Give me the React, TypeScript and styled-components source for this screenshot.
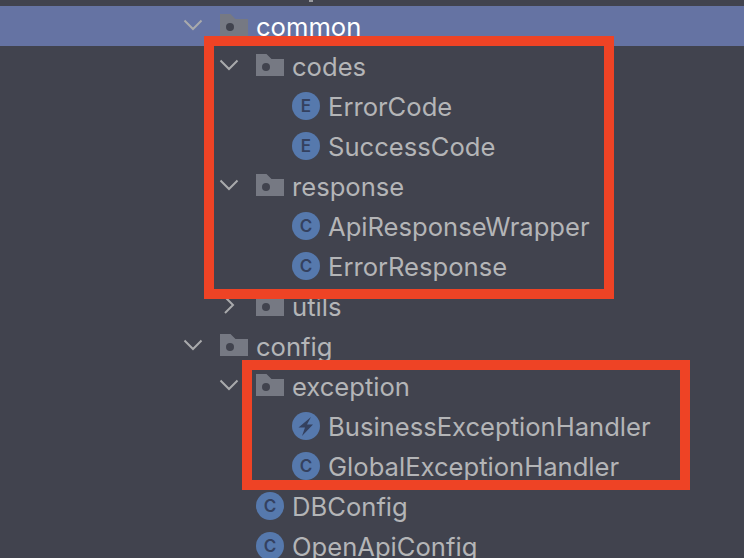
import React from "react";
import styled, { createGlobalStyle } from "styled-components";

type Kind = "enum" | "class" | "aspect";

type Node = {
  label: string;
  depth: number;
  folder?: boolean;
  open?: boolean;
  kind?: Kind;
  selected?: boolean;
};

const GlobalStyle = createGlobalStyle`
  html, body {
    margin: 0;
    background: #41434e;
  }
`;

const Page = styled.div`
  position: relative;
  width: 744px;
  height: 558px;
  overflow: hidden;
  background: #41434e;
  font-family: Inter, "Liberation Sans", sans-serif;
`;

const Tree = styled.div`
  display: flex;
  flex-direction: column;
  margin-top: 6px;
`;

const Row = styled.div<{ $selected?: boolean; $depth: number }>`
  display: flex;
  align-items: center;
  height: 40px;
  flex: none;
  padding-left: ${(p) => 182 + p.$depth * 36}px;
  background: ${(p) => (p.$selected ? "#6573a3" : "transparent")};
  color: ${(p) => (p.$selected ? "#ffffff" : "#b4b5b7")};
`;

const Toggle = styled.span`
  display: flex;
  align-items: center;
  justify-content: center;
  width: 22px;
  height: 24px;
  margin: 0 16px 2px 0;
  color: #a9aaac;
`;

const Folder = styled.svg`
  flex: none;
  margin-bottom: 2px;
`;

const Label = styled.span`
  font-size: 25.6px;
  line-height: 40px;
  white-space: nowrap;
  margin-left: 8px;
  padding-top: 1px;
`;

const Badge = styled.span`
  display: flex;
  align-items: center;
  justify-content: center;
  flex: none;
  width: 28px;
  height: 28px;
  margin-left: 38px;
  border-radius: 50%;
  background: #5679ad;
  color: #34415f;
  font-size: 17px;
  font-weight: 600;
  line-height: 1;
`;

const Marker = styled.div<{ $left: number; $top: number; $width: number; $height: number }>`
  position: absolute;
  left: ${(p) => p.$left}px;
  top: ${(p) => p.$top}px;
  width: ${(p) => p.$width}px;
  height: ${(p) => p.$height}px;
  box-sizing: border-box;
  border: 10px solid #ee4325;
`;

// tail of a letter from the row scrolled away above the top edge
const ClippedGlyph = styled.span`
  position: absolute;
  left: 309px;
  top: 0;
  width: 4px;
  height: 2px;
  background: #9a9ba0;
`;

const nodes: Node[] = [
  { label: "common", depth: 0, folder: true, open: true, selected: true },
  { label: "codes", depth: 1, folder: true, open: true },
  { label: "ErrorCode", depth: 2, kind: "enum" },
  { label: "SuccessCode", depth: 2, kind: "enum" },
  { label: "response", depth: 1, folder: true, open: true },
  { label: "ApiResponseWrapper", depth: 2, kind: "class" },
  { label: "ErrorResponse", depth: 2, kind: "class" },
  { label: "utils", depth: 1, folder: true },
  { label: "config", depth: 0, folder: true, open: true },
  { label: "exception", depth: 1, folder: true, open: true },
  { label: "BusinessExceptionHandler", depth: 2, kind: "aspect" },
  { label: "GlobalExceptionHandler", depth: 2, kind: "class" },
  { label: "DBConfig", depth: 1, kind: "class" },
  { label: "OpenApiConfig", depth: 1, kind: "class" },
];

const FolderIcon = () => (
  <Folder width="28" height="22" viewBox="0 0 28 22">
    <path d="M0 0h10.5l5 5H28v17H0z" fill="#767983" />
    <circle cx="10" cy="13" r="4" fill="#41434e" />
  </Folder>
);

const Chevron = ({ open }: { open?: boolean }) => (
  <svg width="20" height="20" viewBox="0 0 20 20" fill="none" stroke="currentColor" strokeWidth="2">
    <path d={open ? "M1.500 5.500 10 14l8.500-8.500" : "M6 2l8 8-8 8"} />
  </svg>
);

const BoltIcon = () => (
  <svg width="28" height="28" viewBox="0 0 28 28">
    <path d="M19 5 6.500 15.500H13L10 24l11-11.500H15z" fill="#34415f" />
  </svg>
);

const KindBadge = ({ kind }: { kind: Kind }) => {
  if (kind === "aspect") {
    return (
      <Badge>
        <BoltIcon />
      </Badge>
    );
  }
  return <Badge>{kind === "enum" ? "E" : "C"}</Badge>;
};

export default function App() {
  return (
    <Page>
      <GlobalStyle />
      <ClippedGlyph />
      <Tree>
        {nodes.map((node) => (
          <Row key={node.label} $depth={node.depth} $selected={node.selected}>
            {node.folder ? (
              <>
                <Toggle>
                  <Chevron open={node.open} />
                </Toggle>
                <FolderIcon />
              </>
            ) : (
              <KindBadge kind={node.kind as Kind} />
            )}
            <Label>{node.label}</Label>
          </Row>
        ))}
      </Tree>
      <Marker $left={204} $top={36} $width={410} $height={263} />
      <Marker $left={242} $top={360} $width={448} $height={130} />
    </Page>
  );
}
